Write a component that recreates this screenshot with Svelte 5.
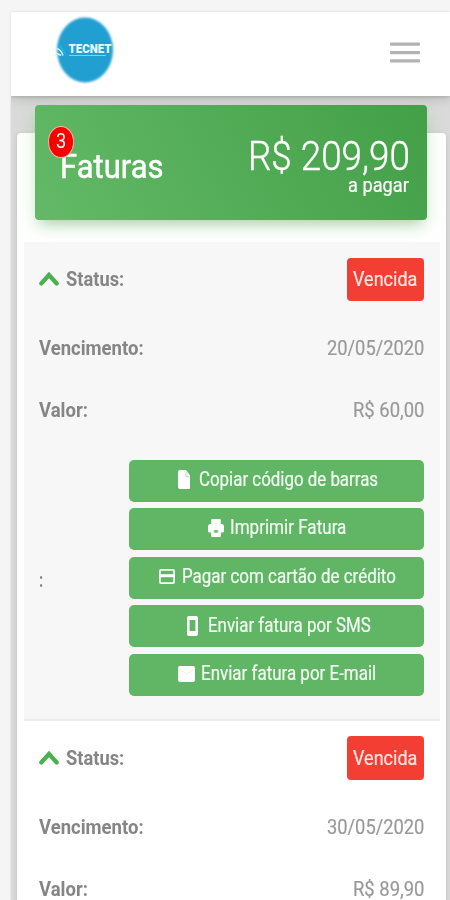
<script>
  const actions = [
    { icon: 'file', label: 'Copiar código de barras', width: 179, iconWidth: 12.5, gap: 8.5, shift: 1, inset: 3 },
    { icon: 'print', label: 'Imprimir Fatura', width: 116, iconWidth: 16, gap: 6.5, shift: 0.5, inset: 1 },
    { icon: 'card', label: 'Pagar com cartão de crédito', width: 213.5, iconWidth: 16, gap: 7, shift: 0.5, inset: 1.5 },
    { icon: 'phone', label: 'Enviar fatura por SMS', width: 163, iconWidth: 11, gap: 10, shift: 1.5, inset: 5 },
    { icon: 'mail', label: 'Enviar fatura por E-mail', width: 175.5, iconWidth: 17, gap: 6, shift: 0.5, inset: 2 }
  ];
  const invoices = [
    { due: '20/05/2020', value: 'R$ 60,00' },
    { due: '30/05/2020', value: 'R$ 89,90' }
  ];

  // Condenses a line of text to the given width.
  function squeeze(node, width) {
    node.style.transform = `scaleX(${width / node.offsetWidth})`;
  }
</script>

{#snippet fit(text, width)}
  <span class="fit" style:width="{width}px"><span class="glyphs" use:squeeze={width}>{text}</span></span>
{/snippet}

{#snippet glyph(name)}
  {#if name === 'file'}
    <svg width="12.5" height="19" viewBox="0 0 12.5 19"><path fill="#fff" d="M2 0h6l4.5 6v11a2 2 0 0 1-2 2H2a2 2 0 0 1-2-2V2a2 2 0 0 1 2-2z" /><path d="M8 2v4.8h3" fill="none" stroke="#a8d8aa" stroke-width=".9" /></svg>
  {:else if name === 'print'}
    <svg width="16" height="18" viewBox="0 0 16 18"><path fill="#fff" d="M4.200 0h7.600a1 1 0 0 1 1 1v4h.6A2.600 2.600 0 0 1 16 7.600v4.400a1.500 1.500 0 0 1-1.500 1.500H13V16.500a1.500 1.500 0 0 1-1.500 1.500h-7A1.500 1.500 0 0 1 3 16.500V13.500H1.500A1.500 1.500 0 0 1 0 12V7.600A2.600 2.600 0 0 1 2.600 5h.6V1a1 1 0 0 1 1-1z" /><ellipse cx="8" cy="12.300" rx="2.600" ry="1.600" fill="#7cc47f" /></svg>
  {:else if name === 'card'}
    <svg width="16" height="15" viewBox="0 0 16 15"><rect x=".9" y=".9" width="14.200" height="13.200" rx="1.200" fill="none" stroke="#fff" stroke-width="1.700" /><path d="M1 6.700h14" stroke="#fff" stroke-width="3" /></svg>
  {:else if name === 'phone'}
    <svg width="11" height="20" viewBox="0 0 11 20"><path fill="#fff" fill-rule="evenodd" d="M2 0h7a2 2 0 0 1 2 2v16a2 2 0 0 1-2 2H2a2 2 0 0 1-2-2V2a2 2 0 0 1 2-2zm.6 4v11h5.800V4z" /></svg>
  {:else}
    <svg width="17" height="16" viewBox="0 0 17 16"><rect width="17" height="16" rx="2" fill="#fff" /><path d="M2 3.500l6.500 4.500L15 3.500" fill="none" stroke="#e6f3e6" stroke-width="1" /></svg>
  {/if}
{/snippet}

<div class="page">
  <div class="shell">
    <header>
      <svg class="logo" width="64" height="72" viewBox="0 0 64 72">
        <defs>
          <filter id="soft" x="-10%" y="-10%" width="120%" height="120%"><feGaussianBlur stdDeviation="1" /></filter>
        </defs>
        <ellipse cx="32" cy="36" rx="28" ry="32.500" fill="#219fd1" filter="url(#soft)" />
        <path d="M4 39.500l4 2M4 34.500q4 1 6 7" fill="none" stroke="#d5f3fb" stroke-width="1.500" />
        <path d="M5 31q4 2 7 9" fill="none" stroke="#16b5ed" stroke-width="2" />
        <text x="15.500" y="39" textLength="43" lengthAdjust="spacingAndGlyphs">TECNET</text>
        <path d="M16 41.500h37" stroke="#88cce6" stroke-width="1" />
      </svg>
      <svg class="menu" width="30" height="22" viewBox="0 0 30 22">
        <g fill="#b2b2b2"><rect y=".5" width="30" height="3.200" rx="1" /><rect y="9" width="30" height="3.200" rx="1" /><rect y="17.300" width="30" height="3.200" rx="1" /></g>
      </svg>
    </header>

    <main>
      <section class="card">
        <div class="summary">
          <div class="title">
            {@render fit('Faturas', 104)}
            <span class="badge">{@render fit('3', 10)}</span>
          </div>
          <div class="total">
            <div class="amount">{@render fit('R$ 209,90', 161.5)}</div>
            <div class="caption">{@render fit('a pagar', 61)}</div>
          </div>
        </div>

        {#each invoices as invoice, i}
          <article class:shaded={i === 0}>
            <div class="row status">
              <strong>
                <svg class="chevron" width="20" height="16" viewBox="0 0 20 16"><path d="M2.300 12.500l7.700-8.500 7.700 8.500" fill="none" stroke="#4caf50" stroke-width="4.200" stroke-linecap="round" /></svg>
                {@render fit('Status:', 58.5)}
              </strong>
              <span class="tag">{@render fit('Vencida', 64)}</span>
            </div>
            <div class="row">
              <strong>{@render fit('Vencimento:', 104.5)}</strong>
              {@render fit(invoice.due, 97)}
            </div>
            <div class="row">
              <strong>{@render fit('Valor:', 49)}</strong>
              {@render fit(invoice.value, 71)}
            </div>
            {#if i === 0}
              <div class="row actions">
                <strong>{@render fit(':', 4.5)}</strong>
                <div class="buttons">
                  {#each actions as action}
                    <button style:gap="{action.gap}px" style:padding-left="{action.inset}px">
                      <span class="icon" style:padding-top="{action.shift * 2}px">{@render glyph(action.icon)}</span>
                      {@render fit(action.label, action.width)}
                    </button>
                  {/each}
                </div>
              </div>
            {/if}
          </article>
        {/each}
      </section>
    </main>
  </div>
</div>

<style>
  :global(body) { margin: 0; }
  .page {
    box-sizing: border-box;
    height: 900px;
    overflow: hidden;
    padding: 12px 0 0 11px;
    background: #f5f5f5;
    font-family: Roboto, "Liberation Sans", sans-serif;
    font-size: 20px;
    line-height: 24px;
    color: #999;
    -webkit-text-stroke: .2px currentColor;
  }
  .shell { height: 888px; background: #dadada; box-shadow: 0 0 2px #d4d4d4; }
  header {
    position: relative;
    box-sizing: border-box;
    height: 83.500px;
    padding: 2px 30px 0 42px;
    display: flex;
    align-items: flex-start;
    justify-content: space-between;
    background: #fff;
    box-shadow: 0 2px 12px rgba(0, 0, 0, .17), 0 1px 3px rgba(0, 0, 0, .14);
    clip-path: inset(0 0 -30px 0);
  }
  .logo text { font-size: 12.500px; font-weight: 900; fill: #e6f8fd; }
  .menu { margin-top: 28px; }
  svg { display: block; flex: none; }
  main { padding: 37.500px 4px 0 5.500px; }
  .card {
    box-sizing: border-box;
    height: 780px;
    padding: 0 6.500px 0 7px;
    border-radius: 4px;
    background: #fff;
    box-shadow: 0 1px 5px rgba(0, 0, 0, .12);
  }
  .summary {
    position: relative;
    box-sizing: border-box;
    display: flex;
    justify-content: space-between;
    height: 114.500px;
    margin: 0 12.500px -5.500px 11.500px;
    padding: 0 18px 0 25px;
    transform: translateY(-28px);
    border-radius: 4px;
    background: linear-gradient(60deg, #63b967, #43a047);
    box-shadow: 0 6px 20px rgba(76, 175, 80, .18), 0 9px 12px -6px rgba(60, 140, 64, .35);
    color: #fff;
  }
  .title { position: relative; padding-top: 40px; font-size: 34px; line-height: 42px; -webkit-text-stroke: .5px #fff; }
  .badge {
    position: absolute;
    top: 20.500px;
    left: -12.500px;
    box-sizing: border-box;
    width: 26.500px;
    height: 32px;
    display: flex;
    align-items: center;
    justify-content: center;
    padding-bottom: 2px;
    border: 1px solid #ffb3a5;
    border-radius: 50%;
    background: #fa0000;
    font-size: 20px;
    line-height: 24px;
    -webkit-text-stroke: 0;
  }
  .total { display: flex; flex-direction: column; align-items: flex-end; padding-top: 26px; }
  .amount { height: 42px; font-size: 41px; line-height: 50px; font-weight: 300; -webkit-text-stroke: .4px #fff; }
  .caption { height: 24px; }
  .fit { display: block; flex: none; white-space: nowrap; }
  .glyphs { display: inline-block; transform-origin: 0 50%; }
  article { padding: 0 16px 0 15px; }
  .shaded { background: #f7f7f7; border-bottom: 2px solid #ececec; }
  .row { display: flex; align-items: center; justify-content: space-between; height: 62.400px; }
  .status { height: 74.800px; }
  .status strong { gap: 7.500px; }
  strong { display: flex; align-items: center; color: #858585; font-weight: 700; -webkit-text-stroke: 0; }
  .tag {
    box-sizing: border-box;
    width: 76.500px;
    height: 43.500px;
    display: flex;
    align-items: center;
    justify-content: center;
    border-radius: 4px;
    background: #f33e34;
    color: #ffe9e7;
  }
  .actions { height: 277px; }
  .buttons { display: flex; flex-direction: column; gap: 6.650px; width: 294.500px; padding-bottom: 4.500px; }
  button {
    height: 42px;
    padding: 0 0 3.500px;
    display: flex;
    align-items: center;
    justify-content: center;
    border: 0;
    border-radius: 5px;
    background: #61b665;
    color: #f3fcf3;
    font: inherit;
    -webkit-text-stroke: inherit;
  }
</style>
